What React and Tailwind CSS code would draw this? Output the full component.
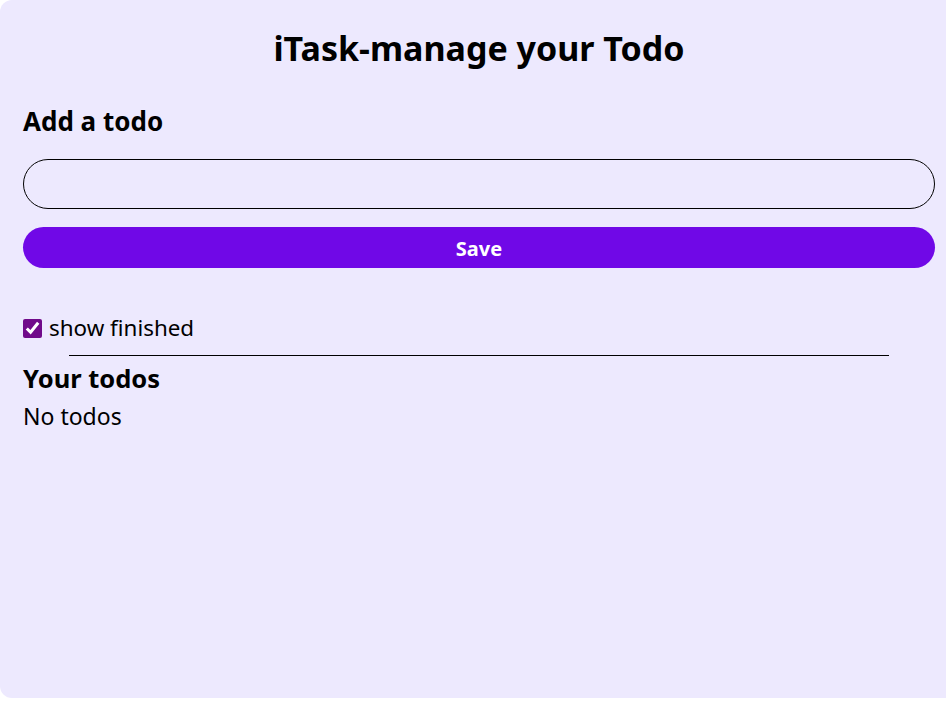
import { useState } from "react";

const App = () => {
  const [todo, setTodo] = useState("");
  const [todos, setTodos] = useState([]);
  const [showFinished, setShowFinished] = useState(true);

  const handleSave = () => {
    if (!todo.trim()) return;
    setTodos([...todos, { id: Date.now(), todo, isCompleted: false }]);
    setTodo("");
  };

  return (
    <div className="font-['Noto_Sans','Open_Sans',sans-serif] text-black">
      <div className="h-[698px] w-full bg-violet-100 rounded-l-xl pl-[23px] pr-[11px] pt-[25px]">
        <h1 className="text-center text-[34px] font-bold leading-[46px]">iTask-manage your Todo</h1>

        {/* Add todo */}
        <div className="mt-[32px] flex flex-col">
          <h2 className="text-[26px] font-bold leading-[36px]">Add a todo</h2>
          <input
            type="text"
            value={todo}
            onChange={(e) => setTodo(e.target.value)}
            className="mt-[20px] h-[50px] w-full rounded-full border border-black bg-transparent px-6 text-[22px] outline-none"
          />
          <button
            onClick={handleSave}
            className="mt-[18px] h-[41px] w-full rounded-full bg-violet-700 pt-[3px] text-[20px] font-bold text-white"
          >
            Save
          </button>
        </div>

        <label className="mt-[45px] flex h-[30px] items-center gap-[7px] text-[22.4px]">
          <input
            type="checkbox"
            checked={showFinished}
            onChange={() => setShowFinished(!showFinished)}
            className="h-[19px] w-[19px] m-0 accent-[#700a8a]"
          />
          show finished
        </label>

        <hr className="mx-auto mt-[12px] w-[90%] border-black" />

        <h2 className="mt-[4px] text-[25.5px] font-bold leading-[36px]">Your todos</h2>
        <div className="mt-[2px] text-[23px] leading-[36px]">
          {todos.length === 0 && <div>No todos</div>}
          {todos
            .filter((item) => showFinished || !item.isCompleted)
            .map((item) => (
              <div key={item.id}>{item.todo}</div>
            ))}
        </div>
      </div>
    </div>
  );
};

export default App;
